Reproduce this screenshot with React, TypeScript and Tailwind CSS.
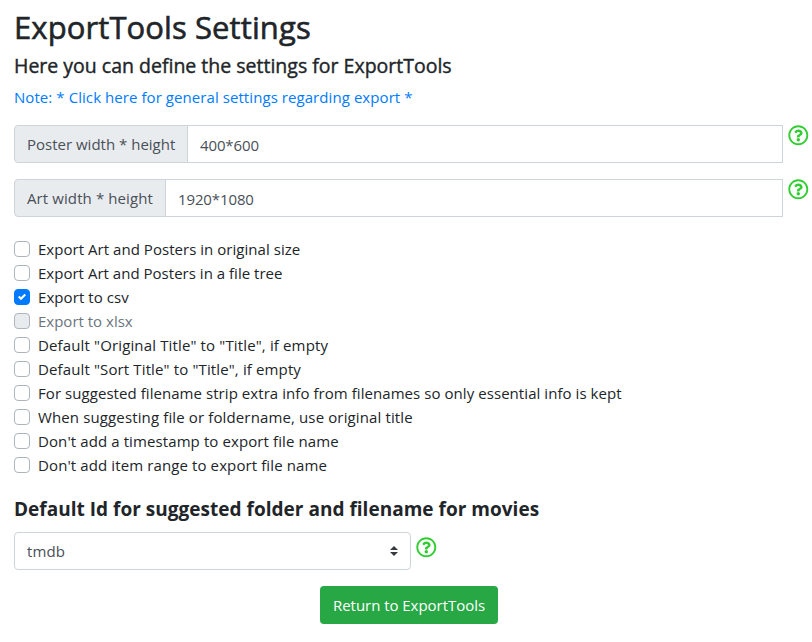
import React from "react";
import { FaRegQuestionCircle } from "react-icons/fa";

type Option = { label: string; track: string; checked?: boolean; disabled?: boolean };

const options: Option[] = [
  { label: "Export Art and Posters in original size", track: "tracking-[0.04px]" },
  { label: "Export Art and Posters in a file tree", track: "tracking-[0.02px]" },
  { label: "Export to csv", track: "tracking-[0.08px]", checked: true },
  { label: "Export to xlsx", track: "", disabled: true },
  { label: 'Default "Original Title" to "Title", if empty', track: "tracking-[0.14px]" },
  { label: 'Default "Sort Title" to "Title", if empty', track: "tracking-[0.13px]" },
  {
    label: "For suggested filename strip extra info from filenames so only essential info is kept",
    track: "tracking-[0.06px]",
  },
  { label: "When suggesting file or foldername, use original title", track: "tracking-[0.13px]" },
  { label: "Don't add a timestamp to export file name", track: "tracking-[0.1px]" },
  { label: "Don't add item range to export file name", track: "tracking-[0.11px]" },
];

function Help() {
  return <FaRegQuestionCircle className="size-[20.6px] shrink-0 text-[#32cd32]" />;
}

type FieldProps = { label: string; value: string; width: string; track: string };

function Field({ label, value, width, track }: FieldProps) {
  return (
    <div className="flex items-start gap-[5px]">
      <div className="flex h-[38px] w-[769px] shrink-0 text-[#495057]">
        <div className={`flex items-center rounded-l border border-[#ced4da] bg-[#e9ecef] pl-3 ${width} ${track}`}>
          {label}
        </div>
        <div className="-ml-px flex flex-1 items-center border border-[#ced4da] bg-white pt-[2px] pl-3 tracking-[-0.12px]">
          {value}
        </div>
      </div>
      <div className="-mr-1 pt-[0.4px]">
        <Help />
      </div>
    </div>
  );
}

function CheckRow({ label, track, checked, disabled }: Option) {
  const box = checked
    ? "border-[#007bff] bg-[#007bff]"
    : disabled
      ? "border-[#adb5bd] bg-[#e9ecef]"
      : "border-[#adb5bd] bg-white";
  return (
    <label className="flex h-6 items-center gap-2">
      <span className={`flex size-4 items-center justify-center rounded border ${box}`}>
        {checked && (
          <svg viewBox="0 0 8 8" className="size-2">
            <path fill="#fff" d="M6.564.75l-3.59 3.612-1.538-1.55L0 4.26l2.974 2.99L8 2.193z" />
          </svg>
        )}
      </span>
      <span className={`${track} ${disabled ? "text-[#6c757d]" : ""}`}>{label}</span>
    </label>
  );
}

export default function App() {
  return (
    <main className="h-[642px] w-[812px] overflow-hidden bg-white pt-2 pl-[14px] font-['Open_Sans',sans-serif] text-[15px] leading-6 whitespace-nowrap text-[#212529]">
      <h1 className="mb-2 text-[31px] leading-[38.4px] tracking-[0.1px] [-webkit-text-stroke:0.6px_#212529]">
        ExportTools Settings
      </h1>
      <h2 className="mb-[7px] text-[19.5px] leading-6 [-webkit-text-stroke:0.4px_#212529]">
        Here you can define the settings for ExportTools
      </h2>
      <a className="block h-6 tracking-[0.07px] text-[#007bff]">
        Note: * Click here for general settings regarding export *
      </a>
      <div className="mt-[15.6px] flex flex-col gap-4">
        <Field label="Poster width * height" value="400*600" width="w-[174px]" track="" />
        <Field label="Art width * height" value="1920*1080" width="w-[152px]" track="tracking-[0.1px]" />
      </div>
      <div className="mt-5">
        {options.map((option) => (
          <CheckRow key={option.label} {...option} />
        ))}
      </div>
      <h3 className="mt-5 text-[19px] leading-6 font-bold tracking-[0.02px]">
        Default Id for suggested folder and filename for movies
      </h3>
      <div className="mt-[11px] flex gap-[5px]">
        <div className="flex h-[38px] w-[397px] items-center justify-between rounded border border-[#ced4da] px-3 text-[#495057]">
          <span className="tracking-[0.1px]">tmdb</span>
          <svg viewBox="0 0 4 5" className="h-[10px] w-2">
            <path fill="#343a40" d="M2 0L0 2h4zm0 5L0 3h4z" />
          </svg>
        </div>
        <div className="pt-[5px]">
          <Help />
        </div>
      </div>
      <button className="mt-4 ml-[306px] flex h-[38px] w-[178px] items-center justify-center rounded bg-[#28a745] tracking-[-0.04px] text-white">
        Return to ExportTools
      </button>
    </main>
  );
}
